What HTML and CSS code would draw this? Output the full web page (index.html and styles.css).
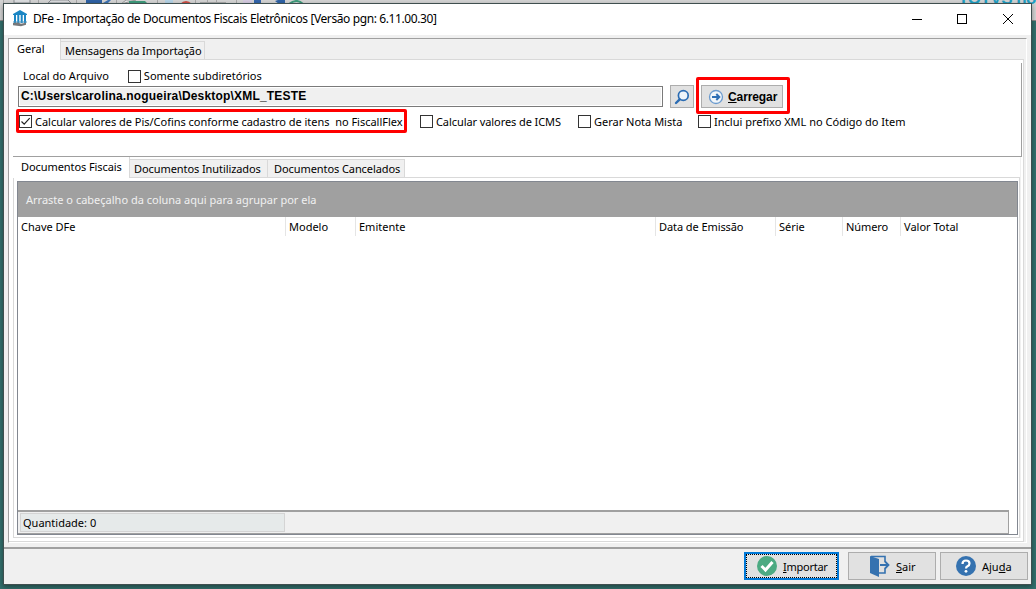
FILE: index.html
```html
<!DOCTYPE html>
<html lang="pt-BR">
<head>
    <meta charset="UTF-8">
    <meta name="viewport" content="width=device-width, initial-scale=1.0">
    <title>DFe - Importação de Documentos Fiscais Eletrônicos</title>
    <link rel="stylesheet" href="styles.css">
</head>
<body>
    <!-- toolbar of the application behind the dialog -->
    <div class="backdrop">
        <svg width="320" height="4" viewBox="0 0 320 4">
            <path d="M14 0v3h16V0M48 3l3-3h17l3 3z" fill="#dcdee0" stroke="#8d9094"/>
            <path d="M3.500 0v4M38.500 0v4M76.500 0v4M116.500 0v4M157.500 0v4M195.500 0v4M236.500 0v4" stroke="#a9a9a9"/>
            <path d="M86 0h16v4H86z" fill="#2f62a5"/>
            <path d="M103 3l5-3h3l-4 4z" fill="#3e74b5"/>
            <path d="M121 4l5-4h10z" fill="#e8eaea" stroke="#999"/>
            <path d="M129 1h16l3 3h-19z" fill="#3f9c7c"/>
            <path d="M165 0h8v4h-8z" fill="#b4d3e6"/>
            <path d="M180 4q6-6 12 0z" fill="#cf4f45"/>
            <path d="M200 2.500h26M207.500 0v4M216.500 0v4" stroke="#aaa"/>
            <path d="M243 0h9v4h-9z" fill="#d5cbe0"/>
            <path d="M254 0h7v3h-7z" fill="#3465ac"/>
            <path d="M275 1l3-1h7v4h-6z" fill="#2f62a5"/>
            <path d="M289 4q8-6 14 0" fill="none" stroke="#3f9c7c" stroke-width="2"/>
        </svg>
        <span class="brand">TOTVS no</span>
    </div>

    <div class="window">
        <div class="titlebar">
            <svg class="app-icon" width="16" height="17" viewBox="0 0 16 17">
                <path d="M8 0l7 4v1H1V4z" fill="#1b86c4"/>
                <path d="M3 5v8M6.300 5v8M9.700 5v8M13 5v8" stroke="#1b86c4" stroke-width="2"/>
                <path d="M1 12h14" stroke="#4d95bd"/>
                <path d="M1 13l5-.5 3 1.300 5-1v2l-5 1.400-8-1z" fill="#77787a"/>
            </svg>
            <span class="title">DFe - Importação de Documentos Fiscais Eletrônicos [Versão pgn: 6.11.00.30]</span>
            <svg class="controls" width="104" height="16" viewBox="0 0 104 16" fill="none" stroke="#000">
                <path d="M1 8.500h10"/>
                <rect x="46.500" y="3.500" width="9" height="9"/>
                <path d="M92 3l10 10M102 3l-10 10"/>
            </svg>
        </div>

        <div class="client">
            <div class="outer-tabs">
                <div class="tabs">
                    <div class="tab active"><span>Geral</span></div>
                    <div class="tab"><span class="snug">Mensagens da Importação</span></div>
                </div>
                <div class="page">
                    <div class="options">
                        <div class="row path-label">
                            <span>Local do Arquivo</span>
                            <label class="check sub"><i class="box"></i><span>Somente subdiretórios</span></label>
                        </div>
                        <div class="row path-row">
                            <div class="path"><span>C:\Users\carolina.nogueira\Desktop\XML_TESTE</span></div>
                            <div class="btn search">
                                <svg width="16" height="16" viewBox="0 0 16 16" fill="none" stroke="#2b6cb3">
                                    <circle cx="9.300" cy="6.500" r="4.900" stroke-width="1.700" fill="#eef4fa"/>
                                    <path d="M5.700 10.300l-3.700 3.700" stroke-width="2.400" stroke-linecap="round"/>
                                </svg>
                            </div>
                            <div class="mark mark-load">
                                <div class="btn load">
                                    <svg width="16" height="16" viewBox="0 0 16 16" fill="none" stroke="#2f6fb5">
                                        <circle cx="8" cy="8" r="6.500" stroke="#6b9bcf" stroke-width="1.300" fill="#f2f6fa"/>
                                        <path d="M4 8h7M8.300 5l3 3-3 3" stroke-width="2"/>
                                    </svg>
                                    <span><u>C</u>arregar</span>
                                </div>
                            </div>
                        </div>
                        <div class="row checks">
                            <div class="mark mark-calc">
                                <label class="check"><i class="box"><svg width="11" height="11" viewBox="0 0 11 11" fill="none" stroke="#222"><path d="M1.500 5.500l2.700 2.700 5.500-6" stroke-width="1.200"/></svg></i><span>Calcular valores de Pis/Cofins conforme cadastro de itens&nbsp; no FiscallFlex</span></label>
                            </div>
                            <label class="check icms"><i class="box"></i><span class="snug">Calcular valores de ICMS</span></label>
                            <label class="check mista"><i class="box"></i><span>Gerar Nota Mista</span></label>
                            <label class="check prefix"><i class="box"></i><span>Inclui prefixo XML no Código do Item</span></label>
                        </div>
                    </div>

                    <div class="inner-tabs">
                        <div class="tabs">
                            <div class="tab active"><span class="snug">Documentos Fiscais</span></div>
                            <div class="tab"><span class="snug">Documentos Inutilizados</span></div>
                            <div class="tab"><span class="snug">Documentos Cancelados</span></div>
                        </div>
                        <div class="sheet">
                            <div class="grid">
                                <div class="group-band"><span>Arraste o cabeçalho da coluna aqui para agrupar por ela</span></div>
                                <div class="grid-head">
                                    <div><span>Chave DFe</span></div>
                                    <div><span>Modelo</span></div>
                                    <div><span>Emitente</span></div>
                                    <div><span class="snug">Data de Emissão</span></div>
                                    <div><span>Série</span></div>
                                    <div><span class="snug">Número</span></div>
                                    <div><span>Valor Total</span></div>
                                </div>
                                <div class="grid-body"></div>
                                <div class="grid-foot">
                                    <div class="count"><span>Quantidade: 0</span></div>
                                </div>
                            </div>
                        </div>
                    </div>
                </div>
            </div>

            <div class="actions">
                <div class="btn primary">
                    <svg width="20" height="20" viewBox="0 0 20 20">
                        <circle cx="10" cy="10" r="10" fill="#4caa82"/>
                        <path d="M4.500 10l4 4 7-8" fill="none" stroke="#fff" stroke-width="3"/>
                    </svg>
                    <span><u>I</u>mportar</span>
                </div>
                <div class="btn exit">
                    <svg width="20" height="22" viewBox="0 0 20 22">
                        <path d="M0 1l9 3v18l-9-4z" fill="#3572b0"/>
                        <path d="M1 1.500h14V7M15 13v5H9" fill="none" stroke="#3572b0" stroke-width="1.600"/>
                        <path d="M10 10h8M15 6.500l3.500 3.500-3.500 3.500" fill="none" stroke="#3572b0" stroke-width="1.800"/>
                    </svg>
                    <span><u>S</u>air</span>
                </div>
                <div class="btn help">
                    <svg width="20" height="20" viewBox="0 0 20 20">
                        <circle cx="10" cy="10" r="10" fill="#3572b0"/>
                        <path d="M6.500 8q0-3.500 3.500-3.500t3.500 3q0 1.800-2 2.800-1.500.8-1.500 2.200" fill="none" stroke="#fff" stroke-width="2.200"/>
                        <circle cx="10" cy="15.300" r="1.400" fill="#fff"/>
                    </svg>
                    <span>Aju<u>d</u>a</span>
                </div>
            </div>
        </div>
    </div>
</body>
</html>
```

FILE: styles.css
```css
* {
    box-sizing: border-box;
}
body {
    margin: 0;
    width: 1036px;
    height: 589px;
    overflow: hidden;
    position: relative;
    background-color: #33706d;
    font-family: "Noto Sans", sans-serif;
    font-size: 11px;
    line-height: 14px;
    color: #000;
}
span {
    white-space: nowrap;
}
.snug {
    letter-spacing: -0.08px;
}
svg {
    display: block;
    flex: none;
}

/* application behind */
.backdrop {
    height: 21px;
    background-color: #d4d4d4;
    border-bottom: 1px solid #8a8a8a;
    display: flex;
    justify-content: space-between;
    overflow: hidden;
}
.brand {
    font-family: "Liberation Sans", sans-serif;
    font-weight: bold;
    font-size: 17px;
    line-height: 20px;
    letter-spacing: -0.5px;
    margin-top: -11px;
    color: #1f9fc4;
}

/* dialog */
.window {
    position: absolute;
    left: 3px;
    top: 3px;
    width: 1029px;
    height: 582px;
    border: 1px solid #3f4f4f;
    background-color: #f0f0f0;
    box-shadow: 0 2px 5px rgba(0, 0, 0, 0.4);
    display: flex;
    flex-direction: column;
}
.titlebar {
    height: 31px;
    background-color: #fff;
    display: flex;
    align-items: center;
    padding: 0 16px 2px 8px;
}
.title {
    margin-left: 5px;
    flex: 1;
    font-size: 12px;
    letter-spacing: -0.4px;
}
.client {
    flex: 1;
    display: flex;
    flex-direction: column;
    padding: 3px 0 0;
}
.outer-tabs {
    height: 505px;
    margin: 0 4px;
    border-top: 1px solid #a0a0a0;
    border-left: 1px solid #a0a0a0;
    border-right: 1px solid #fff;
    border-bottom: 1px solid #fff;
    padding: 0 2px 0 0;
    display: flex;
    flex-direction: column;
}
.tabs {
    display: flex;
    align-items: flex-end;
    height: 21px;
    position: relative;
    z-index: 1;
}
.tab {
    height: 19px;
    border: 1px solid #d9d9d9;
    border-left: none;
    background-color: #f0f0f0;
    padding: 2px 4px 0;
}
.tab.active {
    height: 21px;
    border: none;
    border-right: 1px solid #d9d9d9;
    background-color: #fff;
}
.outer-tabs > .tabs .tab {
    width: 144px;
}
.outer-tabs > .tabs .tab.active {
    width: 52px;
    padding: 3px 8px;
}
.page {
    flex: 1;
    margin-top: -1px;
    border: 1px solid #d9d9d9;
    border-left: none;
    background-color: #fff;
    padding: 3px 1px 3px 4px;
    display: flex;
    flex-direction: column;
}
.options {
    height: 94px;
    border-right: 1px solid #a0a0a0;
    border-bottom: 1px solid #a0a0a0;
}
.row {
    display: flex;
    align-items: center;
}
.check {
    display: flex;
    align-items: flex-start;
}
.box {
    width: 13px;
    height: 13px;
    flex: none;
    border: 1px solid #333;
    background-color: #fff;
    margin-right: 3px;
}
.path-label {
    height: 19px;
    padding: 7px 0 0 10px;
}
.sub {
    margin-left: 19px;
}
.sub .box {
    margin-top: 1px;
}
.path-row {
    height: 39px;
    margin: -5px 0 0 5px;
}
.path {
    width: 645px;
    height: 21px;
    border: 1px solid #7a7a7a;
    box-shadow: inset 0 0 0 1px #fff;
    background-color: #f0f0f0;
    padding: 2px;
    font-family: "Liberation Sans", sans-serif;
    font-weight: bold;
    font-size: 12px;
    letter-spacing: 0.18px;
}
.btn {
    border: 1px solid #adadad;
    background-color: #e1e1e1;
    display: flex;
    align-items: center;
}
.search {
    width: 24px;
    height: 23px;
    margin-left: 7px;
    padding-left: 3px;
}
.mark {
    border: 3px solid #f00;
    border-radius: 2px;
}
.mark-load {
    width: 94px;
    height: 37px;
    align-self: flex-start;
    margin-left: 2px;
    padding: 5px 2px;
}
.load {
    width: 82px;
    height: 23px;
    padding-left: 6px;
    font-family: "Liberation Sans", sans-serif;
    font-weight: bold;
    font-size: 12px;
    letter-spacing: -0.1px;
}
.load span {
    margin-left: 4px;
}
.checks {
    height: 24px;
    margin: -7px 0 0 3px;
    align-items: flex-start;
}
.checks > .check {
    margin-top: 6px;
}
.mark-calc {
    width: 391px;
    height: 24px;
    padding-top: 3px;
    letter-spacing: -0.02px;
}
.icms {
    margin-left: 13px;
    width: 158px;
}
.mista {
    width: 120px;
}

/* documents */
.inner-tabs {
    flex: 1;
    display: flex;
    flex-direction: column;
    margin-right: 1px;
    border-right: 1px solid #f0f0f0;
}
.inner-tabs .tab {
    width: 138px;
}
.inner-tabs .tab.active {
    width: 117px;
    padding: 3px 8px;
}
.inner-tabs .tab:last-child {
    width: 137px;
    padding-left: 6px;
}
.sheet {
    flex: 1;
    margin-top: -1px;
    border: 1px solid #d9d9d9;
    padding: 3px 1px 2px 3px;
    display: flex;
}
.grid {
    flex: 1;
    border: 1px solid #828790;
    display: flex;
    flex-direction: column;
}
.group-band {
    height: 35px;
    background-color: #a0a0a0;
    color: #f0f0f0;
    padding: 11px 8px;
}
.grid-head {
    height: 19px;
    display: grid;
    grid-template-columns: 268px 70px 300px 120px 67px 58px 1fr;
}
.grid-head div {
    border-right: 1px solid #e5e5e5;
    padding: 3px 0 0 3px;
}
.grid-head div:last-child {
    border: none;
}
.grid-body {
    flex: 1;
}
.grid-foot {
    width: 991px;
    height: 24px;
    border-top: 2px solid #a0a0a0;
    border-right: 1px solid #a0a0a0;
    border-bottom: 1px solid #a0a0a0;
    background-color: #f0f0f0;
    padding: 1px 2px;
}
.count {
    width: 265px;
    height: 19px;
    border: 1px solid #d4d4d4;
    background-color: #e6eaea;
    padding: 2px;
}

/* bottom buttons */
.actions {
    flex: 1;
    margin-top: 4px;
    border-top: 2px solid #a0a0a0;
    display: flex;
    justify-content: flex-end;
    padding: 3px 3px 0 0;
}
.actions .btn {
    width: 88px;
    height: 28px;
    margin-left: 4px;
}
.actions .btn span {
    margin: 2px 0 0 6px;
}
.actions .primary {
    width: 95px;
    border: 2px solid #0078d7;
    outline: 1px dotted #000;
    outline-offset: -3px;
    margin-right: 5px;
    padding-left: 11px;
    letter-spacing: -0.25px;
}
.actions .exit {
    padding-left: 21px;
}
.actions .help {
    padding-left: 15px;
}
```
